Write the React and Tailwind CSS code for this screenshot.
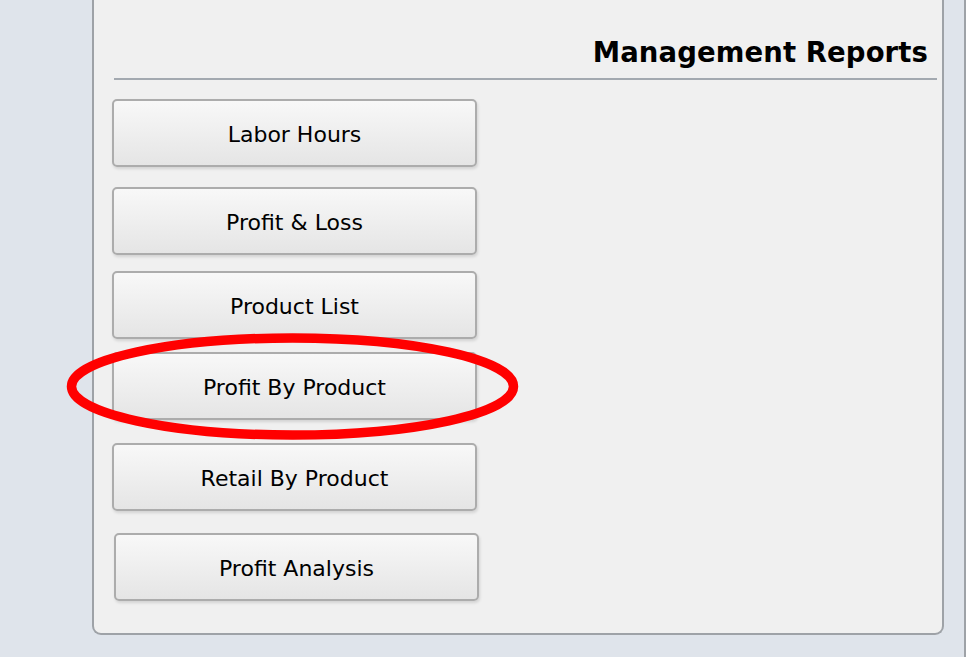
import React from "react";

const buttons = [
  { label: "Labor Hours", mt: "mt-0", ml: "ml-0" },
  { label: "Profit & Loss", mt: "mt-[20px]", ml: "ml-0" },
  { label: "Product List", mt: "mt-[16px]", ml: "ml-0" },
  { label: "Profit By Product", mt: "mt-[13px]", ml: "ml-0" },
  { label: "Retail By Product", mt: "mt-[23px]", ml: "ml-0" },
  { label: "Profit Analysis", mt: "mt-[22px]", ml: "ml-[2px]" },
];

export default function App() {
  return (
    <div
      className="relative w-[966px] h-[657px] bg-[#dfe4eb] flex overflow-hidden"
      style={{ fontFamily: '"DejaVu Sans", Verdana, sans-serif' }}
    >
      <div className="w-[92px] shrink-0" />
      <div className="w-[852px] h-[635px] shrink-0 bg-[#f0f0f0] border-l-2 border-r-2 border-b-2 border-[#9ea2a7] rounded-b-[9px] flex flex-col">
        <div className="h-[36px]" />
        <div className="flex justify-end pr-[14px]">
          <h1 className="text-[27.5px] leading-[32px] font-bold text-black tracking-[0.1px]">
            Management Reports
          </h1>
        </div>
        <div className="mt-[10px] ml-[20px] mr-[5px] h-[2px] bg-[#a3a9b0]" />
        <div className="mt-[19px] ml-[18px] flex flex-col items-start">
          {buttons.map((b) => (
            <button
              key={b.label}
              className={`${b.mt} ${b.ml} w-[365px] h-[68px] pt-[3px] rounded-[5px] border-2 border-[#acacac] bg-gradient-to-b from-[#f8f8f8] to-[#e5e5e5] shadow-[1px_2px_3px_rgba(0,0,0,0.12)] text-[22px] text-black flex items-center justify-center`}
            >
              {b.label}
            </button>
          ))}
        </div>
      </div>
      <div className="w-[20px] shrink-0" />
      <div className="flex-1 h-full bg-[#f0f0f0] border-l-2 border-[#9ea2a7]" />
      <svg
        className="absolute left-0 top-0 pointer-events-none"
        width="966"
        height="657"
        viewBox="0 0 966 657"
      >
        <ellipse
          cx="292.5"
          cy="386.5"
          rx="221"
          ry="48.5"
          fill="none"
          stroke="#ff0000"
          strokeWidth="9.5"
        />
      </svg>
    </div>
  );
}
